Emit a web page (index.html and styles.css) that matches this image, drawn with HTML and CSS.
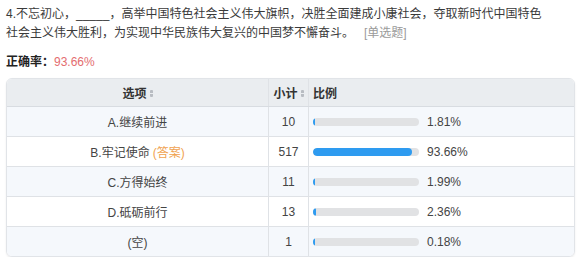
FILE: index.html
```html
<!DOCTYPE html>
<html lang="zh">
<head>
<meta charset="utf-8">
<link rel="stylesheet" href="styles.css">
</head>
<body>
<div class="page">
  <div class="question">4.不忘初心，_____，高举中国特色社会主义伟大旗帜，决胜全面建成小康社会，夺取新时代中国特色社会主义伟大胜利，为实现中华民族伟大复兴的中国梦不懈奋斗。<span class="qtype">[单选题]</span></div>
  <div class="rate"><b>正确率：</b><span class="rate-val">93.66%</span></div>
  <div class="table">
    <div class="row head">
      <div class="c1">选项<span class="sort"></span></div>
      <div class="c2">小计<span class="sort"></span></div>
      <div class="c3">比例</div>
    </div>
    <div class="row alt">
      <div class="c1">A.继续前进</div>
      <div class="c2">10</div>
      <div class="c3"><span class="bar"><span class="fill" style="width:1.81%"></span></span><span class="pct">1.81%</span></div>
    </div>
    <div class="row">
      <div class="c1">B.牢记使命 <span class="ans">(答案)</span></div>
      <div class="c2">517</div>
      <div class="c3"><span class="bar"><span class="fill" style="width:93.66%"></span></span><span class="pct">93.66%</span></div>
    </div>
    <div class="row alt">
      <div class="c1">C.方得始终</div>
      <div class="c2">11</div>
      <div class="c3"><span class="bar"><span class="fill" style="width:1.99%"></span></span><span class="pct">1.99%</span></div>
    </div>
    <div class="row">
      <div class="c1">D.砥砺前行</div>
      <div class="c2">13</div>
      <div class="c3"><span class="bar"><span class="fill" style="width:2.36%"></span></span><span class="pct">2.36%</span></div>
    </div>
    <div class="row alt last">
      <div class="c1">(空)</div>
      <div class="c2">1</div>
      <div class="c3"><span class="bar"><span class="fill" style="width:0.18%"></span></span><span class="pct">0.18%</span></div>
    </div>
  </div>
</div>
</body>
</html>
```

FILE: styles.css
```css
html, body {
  margin: 0;
  padding: 0;
  background: #fff;
}
body {
  font-family: "Liberation Sans", "Noto Sans CJK SC", sans-serif;
  font-size: 12px;
  color: #333;
}
.page {
  padding: 5px 11px 0 6px;
}
.question {
  width: 542px;
  line-height: 19px;
  color: #3a3a3a;
}
.qtype {
  display: inline-block;
  line-height: 16px;
  color: #9a9a9a;
  margin-left: 10px;
}
.rate {
  margin-top: 10px;
  line-height: 18px;
}
.rate b {
  color: #222;
}
.rate-val {
  color: #e46d70;
}
.table {
  margin-top: 7px;
  width: 567px;
  border: 1px solid #e1e4e8;
  border-radius: 6px;
  overflow: hidden;
  box-shadow: 0 1px 2px rgba(0,0,0,0.08);
}
.row {
  display: grid;
  grid-template-columns: 262px 40px 1fr;
  height: 29px;
  border-bottom: 1px solid #dfe2e6;
  background: #fff;
  color: #444;
}
.row.last {
  border-bottom: none;
}
.row.alt {
  background: #f5f8fc;
}
.row.head {
  height: 27px;
  background: #eaedf0;
  font-weight: bold;
  color: #333;
  border-bottom: 1px solid #d8dce1;
}
.row > div {
  display: flex;
  align-items: center;
}
.c1 {
  justify-content: center;
  border-right: 1px solid #dfe2e6;
}
.c2 {
  justify-content: center;
  border-right: 1px solid #dfe2e6;
}
.c3 {
  padding-left: 4px;
}
.sort {
  display: inline-block;
  width: 3px;
  height: 7px;
  margin-left: 3px;
  margin-top: 2px;
  background: linear-gradient(#b8bcc2 0 3px, transparent 3px 4px, #b8bcc2 4px 7px);
  border-radius: 1px;
}
.ans {
  color: #f0a250;
  margin-left: 3px;
}
.bar {
  display: inline-block;
  width: 106px;
  height: 8px;
  border-radius: 4px;
  background: #e1e2e4;
  overflow: hidden;
  margin-right: 8px;
}
.fill {
  display: block;
  height: 100%;
  min-width: 2px;
  background: #2e9bf0;
  border-radius: 4px;
}
.pct {
  color: #444;
}
```
